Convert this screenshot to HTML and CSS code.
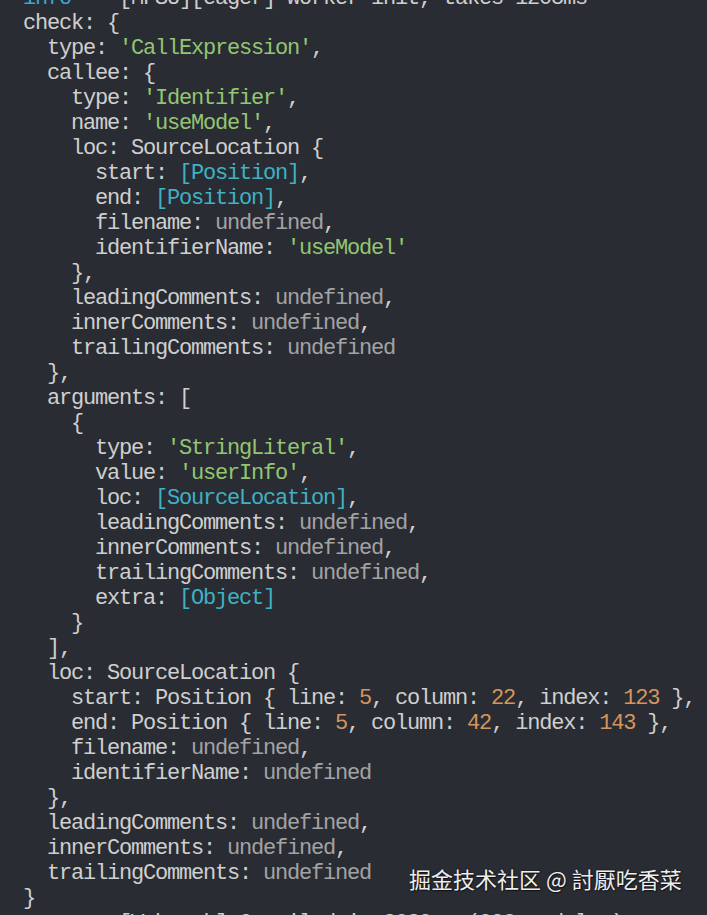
FILE: index.html
```html
<!DOCTYPE html>
<html lang="en">
<head>
<meta charset="utf-8">
<link rel="stylesheet" href="styles.css">
</head>
<body>
<div class="term">
<pre class="log"><span class="info">info</span>    [MFSU][eager] worker init, takes 1208ms
check: {
  type: <span class="s">'CallExpression'</span>,
  callee: {
    type: <span class="s">'Identifier'</span>,
    name: <span class="s">'useModel'</span>,
    loc: SourceLocation {
      start: <span class="c">[Position]</span>,
      end: <span class="c">[Position]</span>,
      filename: <span class="u">undefined</span>,
      identifierName: <span class="s">'useModel'</span>
    },
    leadingComments: <span class="u">undefined</span>,
    innerComments: <span class="u">undefined</span>,
    trailingComments: <span class="u">undefined</span>
  },
  arguments: [
    {
      type: <span class="s">'StringLiteral'</span>,
      value: <span class="s">'userInfo'</span>,
      loc: <span class="c">[SourceLocation]</span>,
      leadingComments: <span class="u">undefined</span>,
      innerComments: <span class="u">undefined</span>,
      trailingComments: <span class="u">undefined</span>,
      extra: <span class="c">[Object]</span>
    }
  ],
  loc: SourceLocation {
    start: Position { line: <span class="n">5</span>, column: <span class="n">22</span>, index: <span class="n">123</span> },
    end: Position { line: <span class="n">5</span>, column: <span class="n">42</span>, index: <span class="n">143</span> },
    filename: <span class="u">undefined</span>,
    identifierName: <span class="u">undefined</span>
  },
  leadingComments: <span class="u">undefined</span>,
  innerComments: <span class="u">undefined</span>,
  trailingComments: <span class="u">undefined</span>
}
        [Webpack] Compiled in 2029ms (998 modules)</pre>
<div class="mark">掘金技术社区 @ 討厭吃香菜</div>
</div>
</body>
</html>
```
FILE: styles.css
```css
html, body {
  margin: 0;
  padding: 0;
  background: #2a2c33;
  overflow: hidden;
}
.term {
  position: relative;
  width: 707px;
  height: 915px;
  overflow: hidden;
  background: #2a2c33;
}
.log {
  margin: -14px 0 0 0;
  padding: 0 0 0 23px;
  font-family: "Liberation Mono", "DejaVu Sans Mono", monospace;
  font-size: 22px;
  letter-spacing: -1.2px;
  line-height: 25px;
  color: #cfcfcf;
}
.info { color: #3aa6cf; }
.s { color: #93c572; }
.c { color: #3fb1c2; }
.n { color: #d4955e; }
.u { color: #a3a3a3; }
.mark {
  position: absolute;
  left: 409px;
  top: 863px;
  font-family: "Noto Sans CJK TC", "Noto Sans CJK SC", "Noto Sans", sans-serif;
  font-size: 22px;
  line-height: 30px;
  color: #eeeeee;
  text-shadow: 0 0 2px rgba(0,0,0,0.6), 1px 1px 1px rgba(0,0,0,0.5);
}
```
